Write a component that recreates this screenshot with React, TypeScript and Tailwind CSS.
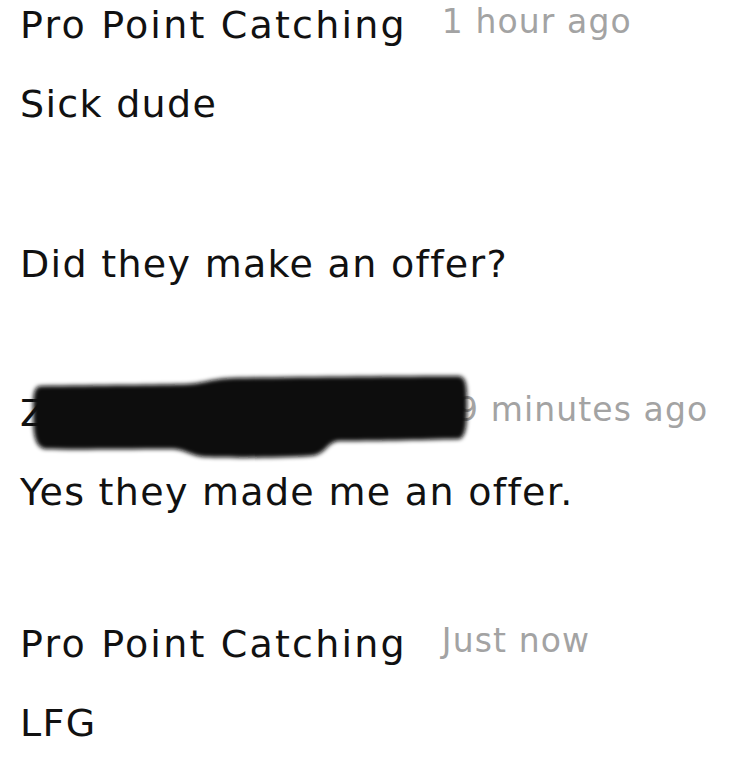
import React from "react";

const font = { fontFamily: "'DejaVu Sans', sans-serif" };

function Header({ name, time, redacted }: { name: string; time: string; redacted?: boolean }) {
  return (
    <div className="relative flex items-baseline h-[79px] leading-[79px] whitespace-nowrap">
      <span className="text-[38px] text-[#111111] tracking-[2.2px]">{name}</span>
      <span className="ml-[35px] text-[33px] text-[#a3a3a3] tracking-[1.1px] relative -top-[5px]">
        {time}
      </span>
      {redacted && (
        <svg
          className="absolute -left-[20px] -top-[13px] z-10"
          width="500"
          height="110"
          viewBox="0 0 500 110"
        >
          <defs>
            <filter id="blur" x="-10%" y="-30%" width="120%" height="160%">
              <feGaussianBlur stdDeviation="2.2" />
            </filter>
          </defs>
          <path
            filter="url(#blur)"
            fill="#0a0a0a"
            d="M40 25 C 100 24, 160 24, 188 23 C 205 22, 210 18, 232 17 C 300 16, 400 15, 458 15 C 466 15, 467 24, 467 40 C 467 60, 467 74, 460 78 C 420 79, 370 80, 338 80 C 326 82, 326 94, 310 95 C 280 97, 230 97, 205 96 C 190 95, 186 88, 170 88 C 120 88, 70 89, 45 88 C 34 86, 33 70, 33 52 C 33 36, 33 26, 40 25 Z"
          />
        </svg>
      )}
    </div>
  );
}

function Body({ children }: { children: React.ReactNode }) {
  return (
    <div className="text-[38px] text-[#111111] tracking-[1.3px] h-[79px] leading-[79px] whitespace-nowrap">
      {children}
    </div>
  );
}

export default function App() {
  return (
    <div className="w-[732px] h-[768px] bg-white overflow-hidden pl-[20px]" style={font}>
      <div className="-mt-[14px]">
        <Header name="Pro Point Catching" time="1 hour ago" />
        <Body>Sick dude</Body>
        <div className="h-[81px]" />
        <Body>Did they make an offer?</Body>
        <div className="h-[70px]" />
        <Header name="Zachary Fernandes" time="9 minutes ago" redacted />
        <Body>Yes they made me an offer.</Body>
        <div className="h-[73px]" />
        <Header name="Pro Point Catching" time="Just now" />
        <Body>LFG</Body>
      </div>
    </div>
  );
}
